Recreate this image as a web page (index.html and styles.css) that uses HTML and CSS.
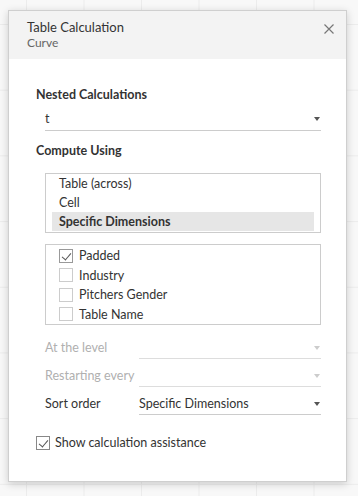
FILE: index.html
```html
<!DOCTYPE html>
<html lang="en">
<head>
  <meta charset="UTF-8" />
  <title>Table Calculation</title>
  <link rel="stylesheet" href="styles.css">
</head>
<body>

  <div class="dialog">
    <div class="dialog-header">
      <div class="titles">
        <div class="title">Table Calculation</div>
        <div class="subtitle">Curve</div>
      </div>
      <button class="btn-close" title="Close">
        <svg width="10" height="10" viewBox="0 0 10 10"><path d="M0.5 0.5L9.5 9.5M9.5 0.5L0.5 9.5" stroke="#777" stroke-width="1.2" fill="none"/></svg>
      </button>
    </div>

    <div class="dialog-body">
      <div class="section-label">Nested Calculations</div>
      <div class="dropdown nested">
        <span>t</span>
        <span class="arrow"></span>
      </div>

      <div class="section-label compute">Compute Using</div>
      <ul class="listbox options">
        <li>Table (across)</li>
        <li>Cell</li>
        <li class="selected">Specific Dimensions</li>
      </ul>

      <ul class="listbox dims">
        <li><span class="check checked"></span>Padded</li>
        <li><span class="check"></span>Industry</li>
        <li><span class="check"></span>Pitchers Gender</li>
        <li><span class="check"></span>Table Name</li>
      </ul>

      <div class="field-row disabled first">
        <span class="field-label">At the level</span>
        <div class="dropdown"><span></span><span class="arrow"></span></div>
      </div>
      <div class="field-row disabled">
        <span class="field-label">Restarting every</span>
        <div class="dropdown"><span></span><span class="arrow"></span></div>
      </div>
      <div class="field-row">
        <span class="field-label">Sort order</span>
        <div class="dropdown"><span>Specific Dimensions</span><span class="arrow"></span></div>
      </div>

      <label class="assist">
        <span class="check checked dark"></span>Show calculation assistance
      </label>
    </div>
  </div>

</body>
</html>
```

FILE: styles.css
```css
* {
  box-sizing: border-box;
}
body {
  margin: 0;
  padding: 10px 0 0 8px;
  height: 496px;
  font-family: Lato, 'Liberation Sans', sans-serif;
  font-size: 13px;
  color: #333;
  background-color: #f8f8f8;
  background-image:
    linear-gradient(to right, #ececec 1px, transparent 1px),
    linear-gradient(to bottom, #ececec 1px, transparent 1px);
  background-size: 57.5px 65.7px;
  background-position: 26px 24px;
}

.dialog {
  width: 339px;
  height: 472px;
  background: white;
  border: 1px solid #cfcfcf;
  box-shadow: 0 2px 8px rgba(0,0,0,0.18);
}

.dialog-header {
  background: #f3f3f3;
  height: 48px;
  padding: 8px 12px 0 18px;
  display: flex;
  justify-content: space-between;
  align-items: flex-start;
}
.title {
  line-height: 16px;
  font-size: 13px;
  color: #333;
}
.subtitle {
  line-height: 16px;
  font-size: 12px;
  color: #666;
}
.btn-close {
  background: transparent;
  border: none;
  padding: 0;
  margin-top: 5px;
  width: 10px;
  height: 10px;
  display: flex;
  cursor: pointer;
}

.dialog-body {
  padding: 28px 25px 0 27px;
  font-size: 12.5px;
}

.section-label {
  font-weight: 700;
  line-height: 16px;
}
.section-label.compute {
  margin-top: 12px;
}

.dropdown {
  display: flex;
  justify-content: space-between;
  align-items: center;
  line-height: 18px;
  height: 20px;
  padding-bottom: 1px;
  border-bottom: 1px solid #ccc;
}
.dropdown .arrow {
  width: 0;
  height: 0;
  margin-right: 1px;
  border-left: 3.5px solid transparent;
  border-right: 3.5px solid transparent;
  border-top: 4px solid #555;
}
.dropdown.nested {
  margin: 7px 0 0 9px;
  height: 21px;
  padding-bottom: 2px;
}

.listbox {
  list-style: none;
  margin: 14px 0 0 9px;
  padding: 0;
  border: 1px solid #ccc;
}
.listbox.options {
  padding: 0 6px 1px;
}
.listbox.options li {
  height: 19px;
  line-height: 19px;
  padding-left: 7px;
}
.listbox.options li.selected {
  background: #e6e6e6;
  font-weight: 700;
}

.listbox.dims {
  margin-top: 11px;
  padding: 1px 0 0 13px;
}
.listbox.dims li {
  height: 19.5px;
  display: flex;
  align-items: center;
  gap: 6px;
}

.check {
  width: 14px;
  height: 14px;
  border: 1px solid #ccc;
  background: white;
  position: relative;
  flex-shrink: 0;
}
.check.checked {
  border-color: #999;
}
.check.checked::after {
  content: '';
  position: absolute;
  left: 4px;
  top: 1px;
  width: 4px;
  height: 8px;
  border-right: 1.3px solid #555;
  border-bottom: 1.3px solid #555;
  transform: rotate(40deg);
}

.field-row {
  display: flex;
  align-items: flex-start;
  margin: 8px 0 0 9px;
}
.field-row.first {
  margin-top: 14px;
}
.field-label {
  width: 94px;
  line-height: 18px;
}
.field-row .dropdown {
  flex: 1;
  height: 20px;
}
.field-row.disabled .field-label {
  color: #b0b0b0;
}
.field-row.disabled .dropdown {
  border-bottom-color: #ddd;
}
.field-row.disabled .arrow {
  border-top-color: #ccc;
}

.assist {
  display: flex;
  align-items: center;
  gap: 5px;
  margin-top: 19px;
  line-height: 18px;
}
.assist .check {
  border-color: #888;
}
```
